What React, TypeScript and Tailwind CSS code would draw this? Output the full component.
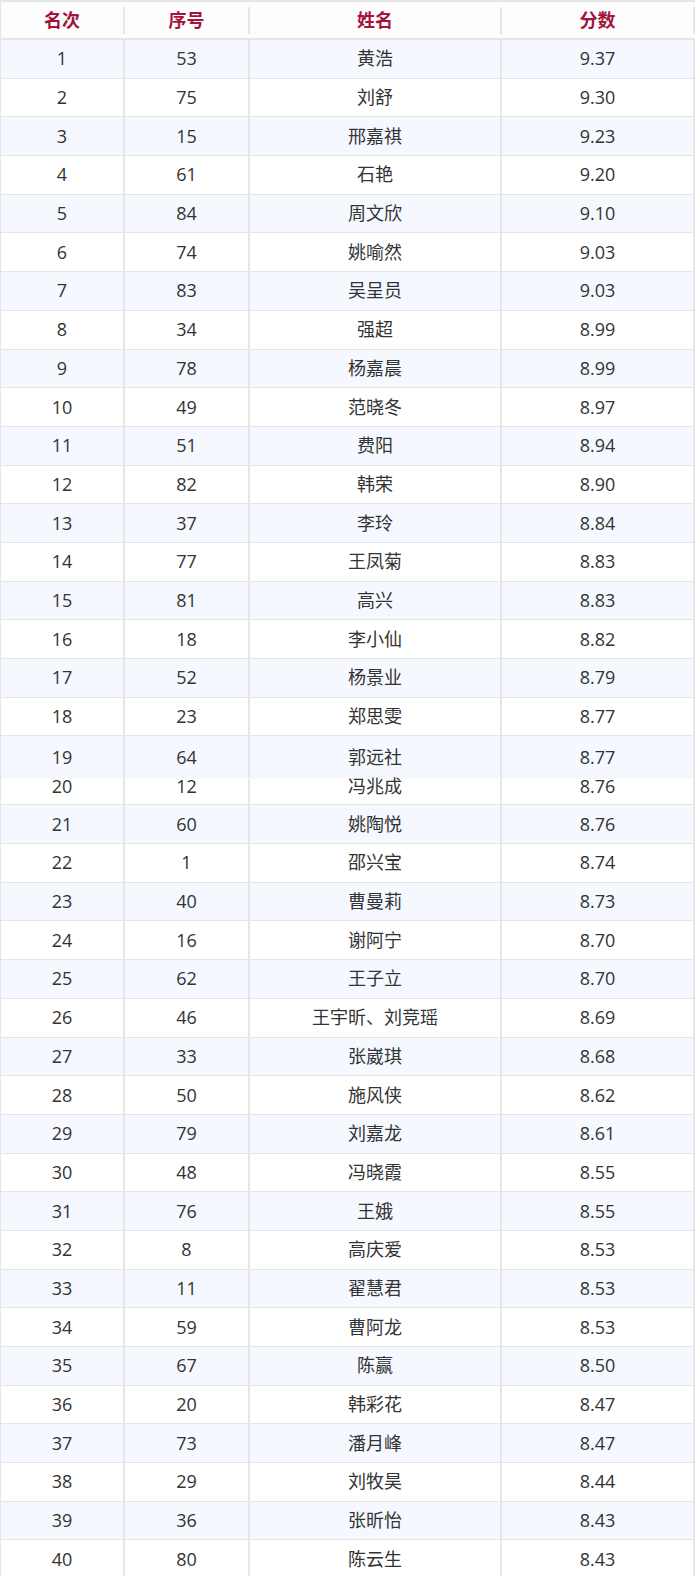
import React from "react";

type Row = [number, number, string, string];

const rows: Row[] = [
  [1, 53, "黄浩", "9.37"],
  [2, 75, "刘舒", "9.30"],
  [3, 15, "邢嘉祺", "9.23"],
  [4, 61, "石艳", "9.20"],
  [5, 84, "周文欣", "9.10"],
  [6, 74, "姚喻然", "9.03"],
  [7, 83, "吴呈员", "9.03"],
  [8, 34, "强超", "8.99"],
  [9, 78, "杨嘉晨", "8.99"],
  [10, 49, "范晓冬", "8.97"],
  [11, 51, "费阳", "8.94"],
  [12, 82, "韩荣", "8.90"],
  [13, 37, "李玲", "8.84"],
  [14, 77, "王凤菊", "8.83"],
  [15, 81, "高兴", "8.83"],
  [16, 18, "李小仙", "8.82"],
  [17, 52, "杨景业", "8.79"],
  [18, 23, "郑思雯", "8.77"],
  [19, 64, "郭远社", "8.77"],
  [20, 12, "冯兆成", "8.76"],
  [21, 60, "姚陶悦", "8.76"],
  [22, 1, "邵兴宝", "8.74"],
  [23, 40, "曹曼莉", "8.73"],
  [24, 16, "谢阿宁", "8.70"],
  [25, 62, "王子立", "8.70"],
  [26, 46, "王宇昕、刘竞瑶", "8.69"],
  [27, 33, "张崴琪", "8.68"],
  [28, 50, "施风侠", "8.62"],
  [29, 79, "刘嘉龙", "8.61"],
  [30, 48, "冯晓霞", "8.55"],
  [31, 76, "王娥", "8.55"],
  [32, 8, "高庆爱", "8.53"],
  [33, 11, "翟慧君", "8.53"],
  [34, 59, "曹阿龙", "8.53"],
  [35, 67, "陈赢", "8.50"],
  [36, 20, "韩彩花", "8.47"],
  [37, 73, "潘月峰", "8.47"],
  [38, 29, "刘牧昊", "8.44"],
  [39, 36, "张昕怡", "8.43"],
  [40, 80, "陈云生", "8.43"],
];

const cols = "grid grid-cols-[124px_125px_252px_193px]";
const cell = "flex justify-center border-r-2 border-[#e6e6e6]";

function rowClass(rank: number) {
  const bg = rank % 2 === 1 ? "bg-[#f5f9ff]" : "bg-white";
  // 19 and 20 are squeezed together with no line between them
  if (rank === 19) return `${cols} ${bg} h-[43px] items-center pb-[1px]`;
  if (rank === 20) return `${cols} ${bg} h-[26px] items-start leading-[12px] border-b border-[#e6e6e6]`;
  return `${cols} ${bg} h-[38.7px] items-center border-b border-[#e6e6e6]`;
}

export default function App() {
  return (
    <div
      className="w-[695px] bg-white text-[18px] text-[#333333]"
      style={{ fontFamily: '"Open Sans", "Noto Sans CJK SC", sans-serif' }}
    >
      <div className="border-t-2 border-l border-[#e6e6e6]">
        <div className={`${cols} h-[38px] items-center bg-[#fdfdfd] border-b-2 border-[#e6e6e6] font-bold text-[#a3133b]`}>
          <div className={cell}>名次</div>
          <div className={cell}>序号</div>
          <div className={cell}>姓名</div>
          <div className={cell}>分数</div>
        </div>
        {rows.map(([rank, no, name, score]) => (
          <div key={rank} className={rowClass(rank)}>
            <div className={`${cell} self-stretch items-center`}>
              <span className={rank === 20 ? "-mt-[12px]" : ""}>{rank}</span>
            </div>
            <div className={`${cell} self-stretch items-center`}>
              <span className={rank === 20 ? "-mt-[12px]" : ""}>{no}</span>
            </div>
            <div className={`${cell} self-stretch items-center`}>
              <span className={rank === 20 ? "-mt-[12px]" : ""}>{name}</span>
            </div>
            <div className={`${cell} self-stretch items-center`}>
              <span className={rank === 20 ? "-mt-[12px]" : ""}>{score}</span>
            </div>
          </div>
        ))}
      </div>
    </div>
  );
}
